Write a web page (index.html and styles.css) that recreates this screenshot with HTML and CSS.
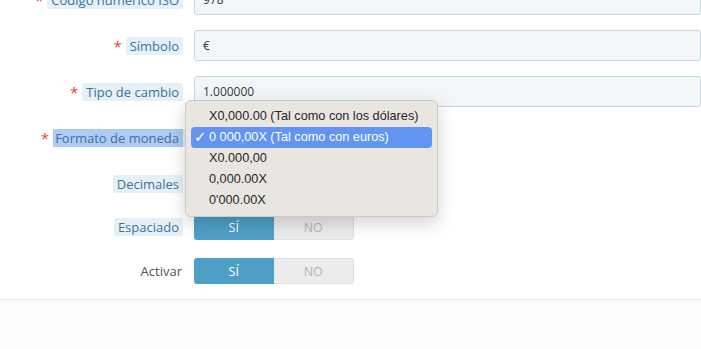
FILE: index.html
```html
<!DOCTYPE html>
<html lang="es">
<head>
    <meta charset="UTF-8">
    <title>Moneda</title>
    <link rel="stylesheet" href="styles.css">
</head>
<body>
    <div class="panel">
        <div class="form">
            <div class="row">
                <div class="label"><span class="req">*</span><span class="hint">Código numérico ISO</span></div>
                <div class="control"><input class="input" type="text" value="978"></div>
            </div>
            <div class="row">
                <div class="label"><span class="req">*</span><span class="hint">Símbolo</span></div>
                <div class="control"><input class="input" type="text" value="€"></div>
            </div>
            <div class="row">
                <div class="label"><span class="req">*</span><span class="hint">Tipo de cambio</span></div>
                <div class="control"><input class="input" type="text" value="1.000000"></div>
            </div>
            <div class="row">
                <div class="label"><span class="req">*</span><span class="hint selected">Formato de moneda</span></div>
                <div class="control">
                    <div class="select-wrap">
                        <input class="input short" type="text" value="">
                        <!-- menú nativo abierto -->
                        <ul class="menu">
                            <li>X0,000.00 (Tal como con los dólares)</li>
                            <li class="active"><span class="check">✓</span>0 000,00X (Tal como con euros)</li>
                            <li>X0.000,00</li>
                            <li>0,000.00X</li>
                            <li>0'000.00X</li>
                        </ul>
                    </div>
                </div>
            </div>
            <div class="row">
                <div class="label"><span class="hint">Decimales</span></div>
                <div class="control"><input class="input short" type="text" value=""></div>
            </div>
            <div class="row switch-row">
                <div class="label"><span class="hint">Espaciado</span></div>
                <div class="control">
                    <div class="switch"><span class="on">SÍ</span><span class="off">NO</span></div>
                </div>
            </div>
            <div class="row switch-row">
                <div class="label"><span class="plain">Activar</span></div>
                <div class="control">
                    <div class="switch"><span class="on">SÍ</span><span class="off">NO</span></div>
                </div>
            </div>
        </div>
        <div class="footer"></div>
    </div>
</body>
</html>
```

FILE: styles.css
```css
body {
    margin: 0;
    font-family: "Open Sans", "Liberation Sans", sans-serif;
    font-size: 13px;
    color: #363a41;
    background: #fff;
    overflow: hidden;
}
.panel {
    height: 349px;
    display: flex;
    flex-direction: column;
}
.form {
    margin-top: -16px;
    padding-bottom: 15px;
}
.row {
    display: flex;
    align-items: center;
    height: 31px;
    margin-bottom: 15px;
}
.switch-row {
    height: 26px;
    margin-bottom: 18px;
}
.switch-row:last-child {
    margin-bottom: 0;
}
.label {
    width: 183px;
    display: flex;
    justify-content: flex-end;
    align-items: center;
    gap: 4px;
}
.req {
    color: #e5493a;
    font-size: 15px;
    line-height: 1;
    padding-top: 2px;
}
.hint {
    background: #e6f0f7;
    color: #3e7299;
    border-radius: 2px;
    padding: 0 4px;
    line-height: 18px;
}
.hint.selected {
    background: #acccf6;
    box-shadow: 5px 0 0 #e6f0f7;
    border-radius: 0;
    padding-left: 2px;
}
.plain {
    color: #555;
    padding-right: 1px;
}
.control {
    margin-left: 11px;
    flex: 1;
}
.input {
    box-sizing: border-box;
    width: 100%;
    height: 31px;
    border: 1px solid #c5d5dc;
    border-radius: 3px;
    background: #f3f6f8;
    padding: 0 8px;
    font-family: inherit;
    font-size: 12px;
    color: #363a41;
}
.input.short {
    width: 160px;
}
.select-wrap {
    position: relative;
}
.menu {
    position: absolute;
    left: -9px;
    top: -22px;
    width: 253px;
    box-sizing: border-box;
    margin: 0;
    padding: 5px 5px;
    list-style: none;
    background: #e9e6e1;
    border: 1px solid #cdcac5;
    border-radius: 6px;
    box-shadow: 0 6px 18px rgba(0, 0, 0, 0.18);
    font-family: "Liberation Sans", Arial, sans-serif;
    font-size: 12.7px;
    color: #262626;
}
.menu li {
    height: 21px;
    line-height: 21px;
    padding-left: 18px;
    border-radius: 4px;
    position: relative;
}
.menu li.active {
    background: #6294f2;
    color: #fff;
}
.check {
    position: absolute;
    left: 3px;
    font-size: 15px;
    font-family: "DejaVu Sans", sans-serif;
}
.switch {
    display: flex;
    width: 160px;
    height: 26px;
    border-radius: 3px;
    overflow: hidden;
    font-size: 12.5px;
}
.switch span {
    flex: 1;
    display: flex;
    align-items: center;
    justify-content: center;
}
.on {
    background: #4e9fc6;
    color: #fff;
}
.off {
    background: #ececec;
    color: #b5b5b5;
    border: 1px solid #e0e0e0;
    border-left: none;
    border-radius: 0 3px 3px 0;
}
.footer {
    flex: 1;
    border-top: 1px solid #e5e5e5;
    background: #fafbfc;
}
```
